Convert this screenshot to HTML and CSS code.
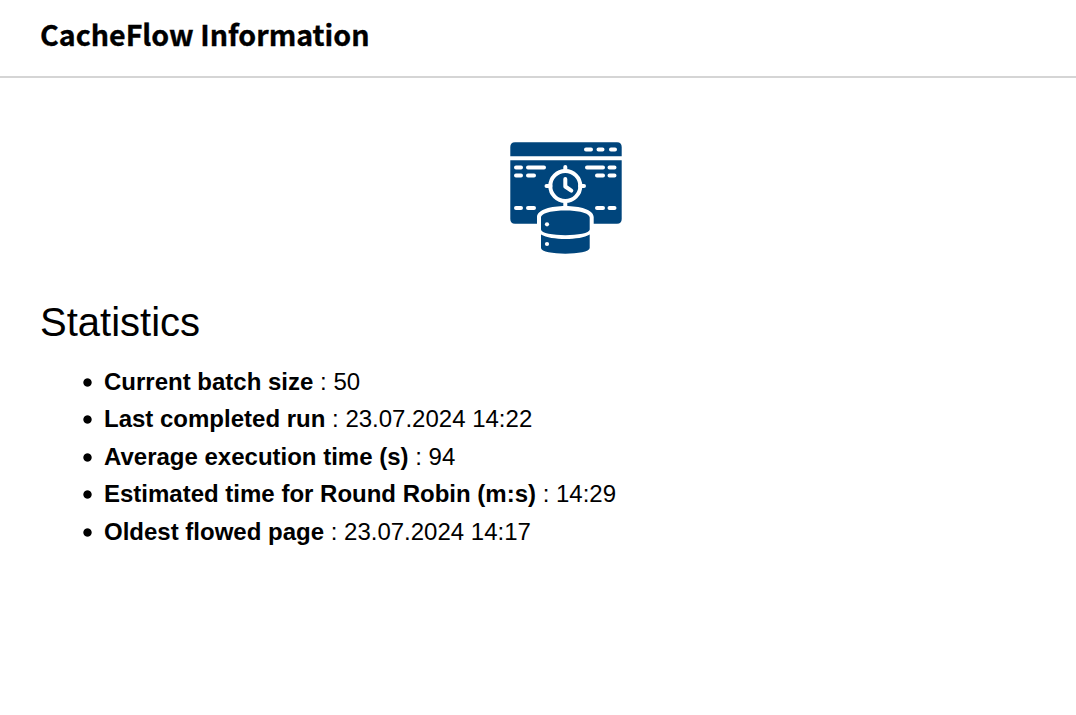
FILE: index.html
```html
<!DOCTYPE html>
<html lang="en">
<head>
<meta charset="utf-8">
<title>CacheFlow Information</title>
<link rel="stylesheet" href="styles.css">
</head>
<body>
<header class="page-header"><h1 class="page-title">CacheFlow Information</h1></header>
<main class="content">
<svg class="logo" viewBox="0 0 112 112" aria-hidden="true">
<path class="fill" d="M.3 14.300V5Q.3.300 5 .300H107Q111.700.300 111.700 5V14.300ZM.3 18.300H111.700V77Q111.700 81.700 107 81.700H83.700V75C83.700 60.300 27 60.300 27 75V81.700H5Q.3 81.700.3 77Z"/>
<path class="dash" d="M76 7.500h5M88.500 7.500h4M101 7.500h4M6 25.500h5M18 25.500h16M6 33.500h5M18 33.500h6M77 25.500h16M99.500 25.500h5M87 33.500h6M99.500 33.500h5M6 66h5M18 66h6M87 66h6M99.500 66h5"/>
<circle class="line" cx="55.300" cy="44" r="15"/>
<path class="line" d="M55.300 25v4M55.300 59v6M36.500 44h4M70 44h4M55.300 37v7.500l6 4.200"/>
<path class="fill" d="M31 75.500C31 66 79.700 66 79.700 75.500V87.500C79.700 95 31 95 31 87.500ZM31 92.500C41 98.500 70 98.500 79.700 92.500V106C79.700 113.500 31 113.500 31 106Z"/>
<circle class="dot" cx="37" cy="82.300" r="2.100"/><circle class="dot" cx="37" cy="102" r="2.100"/>
</svg>
<h2 class="section-title">Statistics</h2>
<ul class="stats">
<li><strong>Current batch size</strong> : 50</li>
<li><strong>Last completed run</strong> : 23.07.2024 14:22</li>
<li><strong>Average execution time (s)</strong> : 94</li>
<li><strong>Estimated time for Round Robin (m:s)</strong> : 14:29</li>
<li><strong>Oldest flowed page</strong> : 23.07.2024 14:17</li>
</ul>
</main>
</body>
</html>
```
FILE: styles.css
```css
body { margin: 0; background: #fff; color: #000; font-family: "Liberation Sans", Arial, sans-serif; }
.page-header { box-sizing: border-box; height: 78px; padding: 11px 40px 0; border-bottom: 2px solid #d5d5d5; }
.page-title { margin: 0; font: bold 28.6px/46px "Noto Sans CJK SC", sans-serif; -webkit-text-stroke: 0.35px #000; }
.content { padding: 64px 0 0 40px; }
.logo { display: block; width: 112px; height: 112px; margin-left: 470px; }
.fill { fill: #00457c; }
.line, .dash { fill: none; stroke: #fff; stroke-width: 4; stroke-linecap: round; stroke-linejoin: round; }
.dot { fill: #fff; }
.section-title { margin: 45px 0 0; font-size: 40px; font-weight: 400; line-height: 46px; }
.stats { margin: 17.75px 0 0; padding-left: 64px; font-size: 24px; line-height: 37.5px; list-style: none; }
.stats li::before { content: ""; display: inline-block; width: 9px; height: 9px; margin: 0 12px 0 -21px; background: radial-gradient(circle, #000 3.7px, transparent 4.6px); vertical-align: 3px; }
```
